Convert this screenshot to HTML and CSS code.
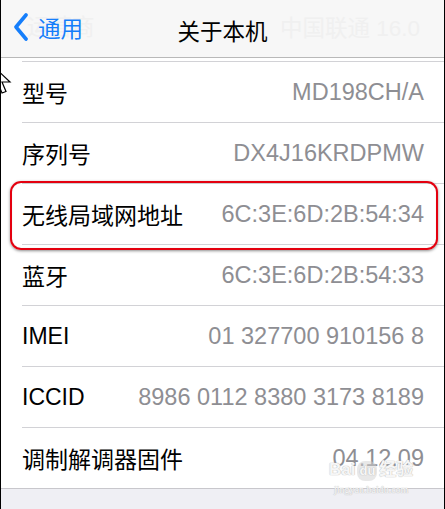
FILE: index.html
```html
<!DOCTYPE HTML>
<html>
<head>
<meta http-equiv="Content-Type" content="text/html; charset=utf-8">
<title>关于本机</title>
<link rel="stylesheet" href="styles.css">
</head>
<body>
<div class="screen">
	<div class="navbar">
		<div class="back">
			<svg class="chevron" width="18" height="28" viewBox="0 0 18 28"><polyline points="14,2 4,14 14,26" fill="none" stroke="#157efb" stroke-width="3.6" stroke-linecap="round" stroke-linejoin="round"/></svg>
			<span class="ghost ghost-left">运营商</span>
			<span class="back-text">通用</span>
		</div>
		<div class="title">关于本机</div>
		<div class="ghost ghost-right">中国联通 16.0</div>
	</div>
	<div class="gap"></div>
	<div class="list">
		<div class="row"><div class="cell"><span class="label">型号</span><span class="value">MD198CH/A</span></div></div>
		<div class="row"><div class="cell"><span class="label">序列号</span><span class="value">DX4J16KRDPMW</span></div></div>
		<div class="row"><div class="cell"><span class="label">无线局域网地址</span><span class="value">6C:3E:6D:2B:54:34</span></div></div>
		<div class="row"><div class="cell"><span class="label">蓝牙</span><span class="value">6C:3E:6D:2B:54:33</span></div></div>
		<div class="row"><div class="cell"><span class="label">IMEI</span><span class="value">01 327700 910156 8</span></div></div>
		<div class="row"><div class="cell"><span class="label">ICCID</span><span class="value">8986 0112 8380 3173 8189</span></div></div>
		<div class="row"><div class="cell"><span class="label">调制解调器固件</span><span class="value">04.12.09</span></div></div>
	</div>
	<div class="footer"></div>

	<!-- overlays -->
	<div class="highlight"></div>
	<svg class="cursor" width="24" height="34" viewBox="0 0 24 34"><path d="M1 1 L1 25 L7 19 L11 29 L15 27.5 L11 18 L19 18 Z" fill="#fff" stroke="#000" stroke-width="1.2" stroke-linejoin="miter"/></svg>
	<div class="watermark"><span class="wm-big">Bai<span class="wm-du">du</span>经验</span><span class="wm-small">jingyan.baidu.com</span></div>
</div>
</body>
</html>
```

FILE: styles.css
```css
body{
	margin:0;
	background:#fff;
}

.screen{
	position:relative;
	width:443px;
	height:509px;
	border-left:1px solid #000;
	border-right:1px solid #000;
	overflow:hidden;
	background:#efeff4;
	font-family:"Liberation Sans", "Noto Sans CJK SC", sans-serif;
}

.navbar{
	position:relative;
	height:57px;
	background:#f7f7f7;
	border-bottom:1px solid #b9b9b9;
	display:flex;
	align-items:center;
	justify-content:center;
}

.back{
	position:absolute;
	left:11px;
	top:13px;
	display:flex;
	align-items:center;
	height:28px;
}

.chevron{
	display:block;
}

.back-text{
	position:relative;
	margin-left:8px;
	color:#157efb;
	font-size:22.5px;
	font-family:"Noto Sans CJK SC", sans-serif;
	line-height:28px;
}

.ghost{
	color:#f0f0f0;
	font-size:22.5px;
	font-family:"Liberation Sans", "Noto Sans CJK SC", sans-serif;
}

.ghost-left{
	position:absolute;
	left:15px;
	top:0;
	line-height:30px;
	white-space:nowrap;
}

.ghost-right{
	position:absolute;
	left:279px;
	top:14px;
	line-height:30px;
	white-space:nowrap;
}

.title{
	font-family:"Noto Sans CJK SC", sans-serif;
	font-size:22.5px;
	color:#000;
	margin-top:2px;
}

.gap{
	height:3px;
	background:#fff;
}

.list{
	background:#fff;
	border-bottom:1px solid #c8c7cc;
}

.row{
	padding-left:21px;
}

.cell{
	height:60px;
	border-top:1px solid #d2d2d6;
	display:flex;
	align-items:center;
	justify-content:space-between;
	padding-right:20px;
}

.label{
	font-size:23px;
	color:#000;
	font-family:"Liberation Sans", "Noto Sans CJK SC", sans-serif;
}

.value{
	font-size:23.5px;
	color:#8e8e93;
}

.footer{
	height:30px;
}

.highlight{
	position:absolute;
	left:9px;
	top:181px;
	width:424px;
	height:65px;
	border:2px solid #e4000f;
	border-radius:11px;
	box-shadow:0 1px 3px rgba(0,0,0,0.45), inset 0 0 1px rgba(0,0,0,0.2);
}

.cursor{
	position:absolute;
	left:-10px;
	top:64px;
}

.watermark{
	position:absolute;
	left:328px;
	top:460px;
	display:flex;
	flex-direction:column;
	align-items:center;
	color:rgba(255,255,255,0.9);
	text-shadow:0 0 1px #bbb, 0 0 1px #bbb;
}

.wm-big{
	font-size:17px;
	font-weight:bold;
	font-family:"Liberation Sans", "Noto Sans CJK SC", sans-serif;
	line-height:20px;
}

.wm-du{
	display:inline-block;
	margin:0 2px;
	padding:0 2px;
	border-radius:8px;
	background:rgba(210,210,210,0.5);
	font-size:13px;
}

.wm-small{
	font-size:10px;
	font-family:"Liberation Serif", serif;
	line-height:14px;
	margin-top:2px;
}
```
